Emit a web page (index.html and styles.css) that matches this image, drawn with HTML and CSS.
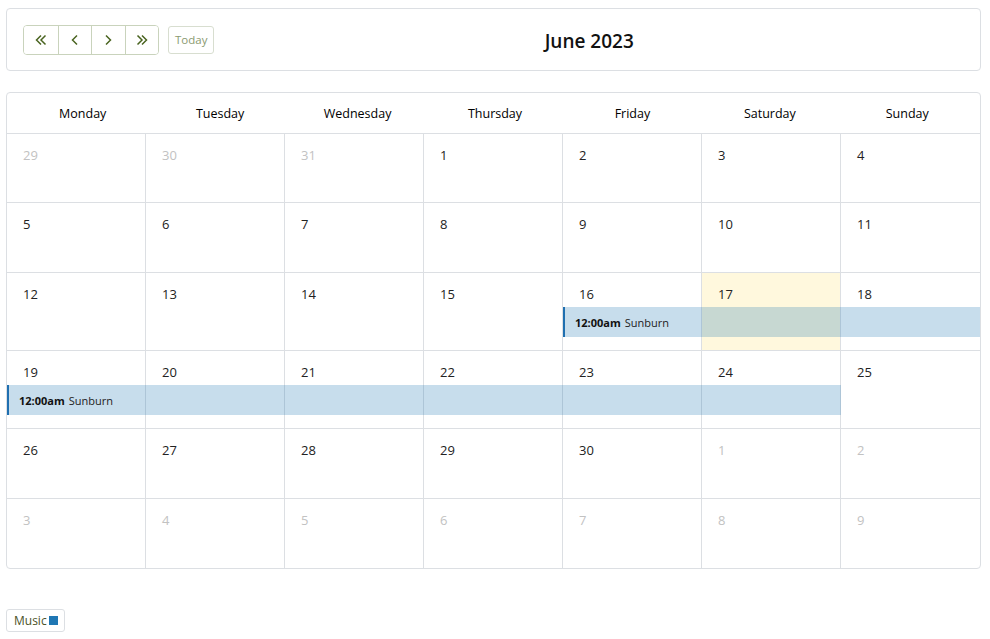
FILE: index.html
```html
<!DOCTYPE html>
<html lang="en">
<head>
    <meta charset="UTF-8">
    <meta name="viewport" content="width=device-width, initial-scale=1.0">
    <title>Event Calendar</title>
    <link rel="stylesheet" href="styles.css">
</head>
<body>

<div class="page">
    <div class="toolbar">
        <div class="nav-group">
            <button class="nav-btn" title="Previous year">
                <svg width="14" height="12" viewBox="0 0 14 12"><path d="M7 1.5 2.5 6 7 10.5M11.5 1.5 7 6l4.5 4.5" fill="none" stroke="currentColor" stroke-width="1.5"/></svg>
            </button>
            <button class="nav-btn" title="Previous month">
                <svg width="10" height="12" viewBox="0 0 10 12"><path d="M7 1.5 2.5 6 7 10.5" fill="none" stroke="currentColor" stroke-width="1.5"/></svg>
            </button>
            <button class="nav-btn" title="Next month">
                <svg width="10" height="12" viewBox="0 0 10 12"><path d="M3 1.5 7.5 6 3 10.5" fill="none" stroke="currentColor" stroke-width="1.5"/></svg>
            </button>
            <button class="nav-btn" title="Next year">
                <svg width="14" height="12" viewBox="0 0 14 12"><path d="M2.5 1.5 7 6l-4.5 4.5M7 1.5 11.5 6 7 10.5" fill="none" stroke="currentColor" stroke-width="1.5"/></svg>
            </button>
        </div>
        <button class="today-btn">Today</button>
        <h1 class="title">June 2023</h1>
    </div>

    <div class="calendar">
        <div class="weekdays">
            <div>Monday</div>
            <div>Tuesday</div>
            <div>Wednesday</div>
            <div>Thursday</div>
            <div>Friday</div>
            <div>Saturday</div>
            <div>Sunday</div>
        </div>

        <div class="week first-week">
            <div class="day muted">29</div>
            <div class="day muted">30</div>
            <div class="day muted">31</div>
            <div class="day">1</div>
            <div class="day">2</div>
            <div class="day">3</div>
            <div class="day">4</div>
        </div>
        <div class="week">
            <div class="day">5</div>
            <div class="day">6</div>
            <div class="day">7</div>
            <div class="day">8</div>
            <div class="day">9</div>
            <div class="day">10</div>
            <div class="day">11</div>
        </div>
        <div class="week has-events">
            <div class="day">12</div>
            <div class="day">13</div>
            <div class="day">14</div>
            <div class="day">15</div>
            <div class="day">16</div>
            <div class="day today">17</div>
            <div class="day">18</div>
            <div class="event span-fri-sun"><b>12:00am</b> Sunburn</div>
        </div>
        <div class="week has-events">
            <div class="day">19</div>
            <div class="day">20</div>
            <div class="day">21</div>
            <div class="day">22</div>
            <div class="day">23</div>
            <div class="day">24</div>
            <div class="day">25</div>
            <div class="event span-mon-sat"><b>12:00am</b> Sunburn</div>
        </div>
        <div class="week">
            <div class="day">26</div>
            <div class="day">27</div>
            <div class="day">28</div>
            <div class="day">29</div>
            <div class="day">30</div>
            <div class="day muted">1</div>
            <div class="day muted">2</div>
        </div>
        <div class="week">
            <div class="day muted">3</div>
            <div class="day muted">4</div>
            <div class="day muted">5</div>
            <div class="day muted">6</div>
            <div class="day muted">7</div>
            <div class="day muted">8</div>
            <div class="day muted">9</div>
        </div>
    </div>

    <div class="legend">
        <span class="legend-item">Music <span class="swatch"></span></span>
    </div>
</div>

</body>
</html>
```

FILE: styles.css
```css
body {
    margin: 0;
    font-family: "Open Sans", "Noto Sans", Arial, sans-serif;
    font-size: 13px;
    color: #222;
    background-color: #fff;
}

.page {
    padding: 8px 9px 0 6px;
}

.toolbar {
    display: flex;
    align-items: center;
    height: 61px;
    padding: 0 16px 0 16px;
    border: 1px solid #dcdfe3;
    border-radius: 4px;
}

.nav-group {
    display: flex;
    border: 1px solid #c9d3bc;
    border-radius: 4px;
    overflow: hidden;
}

.nav-btn {
    width: 33.5px;
    height: 28px;
    padding: 0;
    border: none;
    border-left: 1px solid #c9d3bc;
    background: #fff;
    color: #4a6420;
    display: flex;
    justify-content: center;
    align-items: center;
}

.nav-btn:first-child {
    border-left: none;
}

.today-btn {
    margin-left: 9px;
    height: 28px;
    padding: 0 6px;
    border: 1px solid #d8ded0;
    border-radius: 3px;
    background: #fff;
    color: #8a9a70;
    font-family: inherit;
    font-size: 11.5px;
}

.title {
    flex: 1;
    margin: 0;
    padding-top: 2px;
    text-align: center;
    font-size: 19px;
    font-weight: 600;
    color: #111;
}

.calendar {
    margin-top: 21px;
    border: 1px solid #dcdfe3;
    border-radius: 4px;
    overflow: hidden;
}

.weekdays {
    display: grid;
    grid-template-columns: repeat(7, 1fr);
    height: 40px;
    padding: 0 4px 0 7px;
    align-items: center;
    text-align: center;
    font-size: 12.5px;
    color: #000;
}

.week {
    display: grid;
    grid-template-columns: repeat(7, 1fr);
    grid-template-rows: 69px;
    border-top: 1px solid #dcdfe3;
}

.week.first-week {
    grid-template-rows: 68px;
}

.week.has-events {
    grid-template-rows: 34px 30px 13px;
}

.day {
    grid-row: 1 / -1;
    padding: 12px 0 0 16px;
    border-right: 1px solid #dcdfe3;
    color: #222;
}

.day:nth-child(1) { grid-column: 1; }
.day:nth-child(2) { grid-column: 2; }
.day:nth-child(3) { grid-column: 3; }
.day:nth-child(4) { grid-column: 4; }
.day:nth-child(5) { grid-column: 5; }
.day:nth-child(6) { grid-column: 6; }
.day:nth-child(7) { grid-column: 7; border-right: none; }

.day.muted {
    color: #c2c2c2;
}

.day.today {
    background-color: #fff8dd;
}

.event {
    grid-row: 2;
    display: flex;
    align-items: center;
    gap: 4px;
    padding-left: 10px;
    border-left: 2px solid #1f6fb0;
    background-color: rgba(31, 119, 180, 0.25);
    font-size: 11px;
    color: #222;
}

.event b {
    color: #111;
}

.span-fri-sun {
    grid-column: 5 / 8;
}

.span-mon-sat {
    grid-column: 1 / 7;
}

.legend {
    margin-top: 40px;
}

.legend-item {
    display: inline-flex;
    align-items: center;
    gap: 2px;
    height: 21px;
    padding: 0 6px 0 7px;
    border: 1px solid #dcdfe3;
    border-radius: 3px;
    font-size: 12px;
    color: #4a5228;
}

.swatch {
    width: 9px;
    height: 9px;
    background-color: #1f77b4;
}
```
